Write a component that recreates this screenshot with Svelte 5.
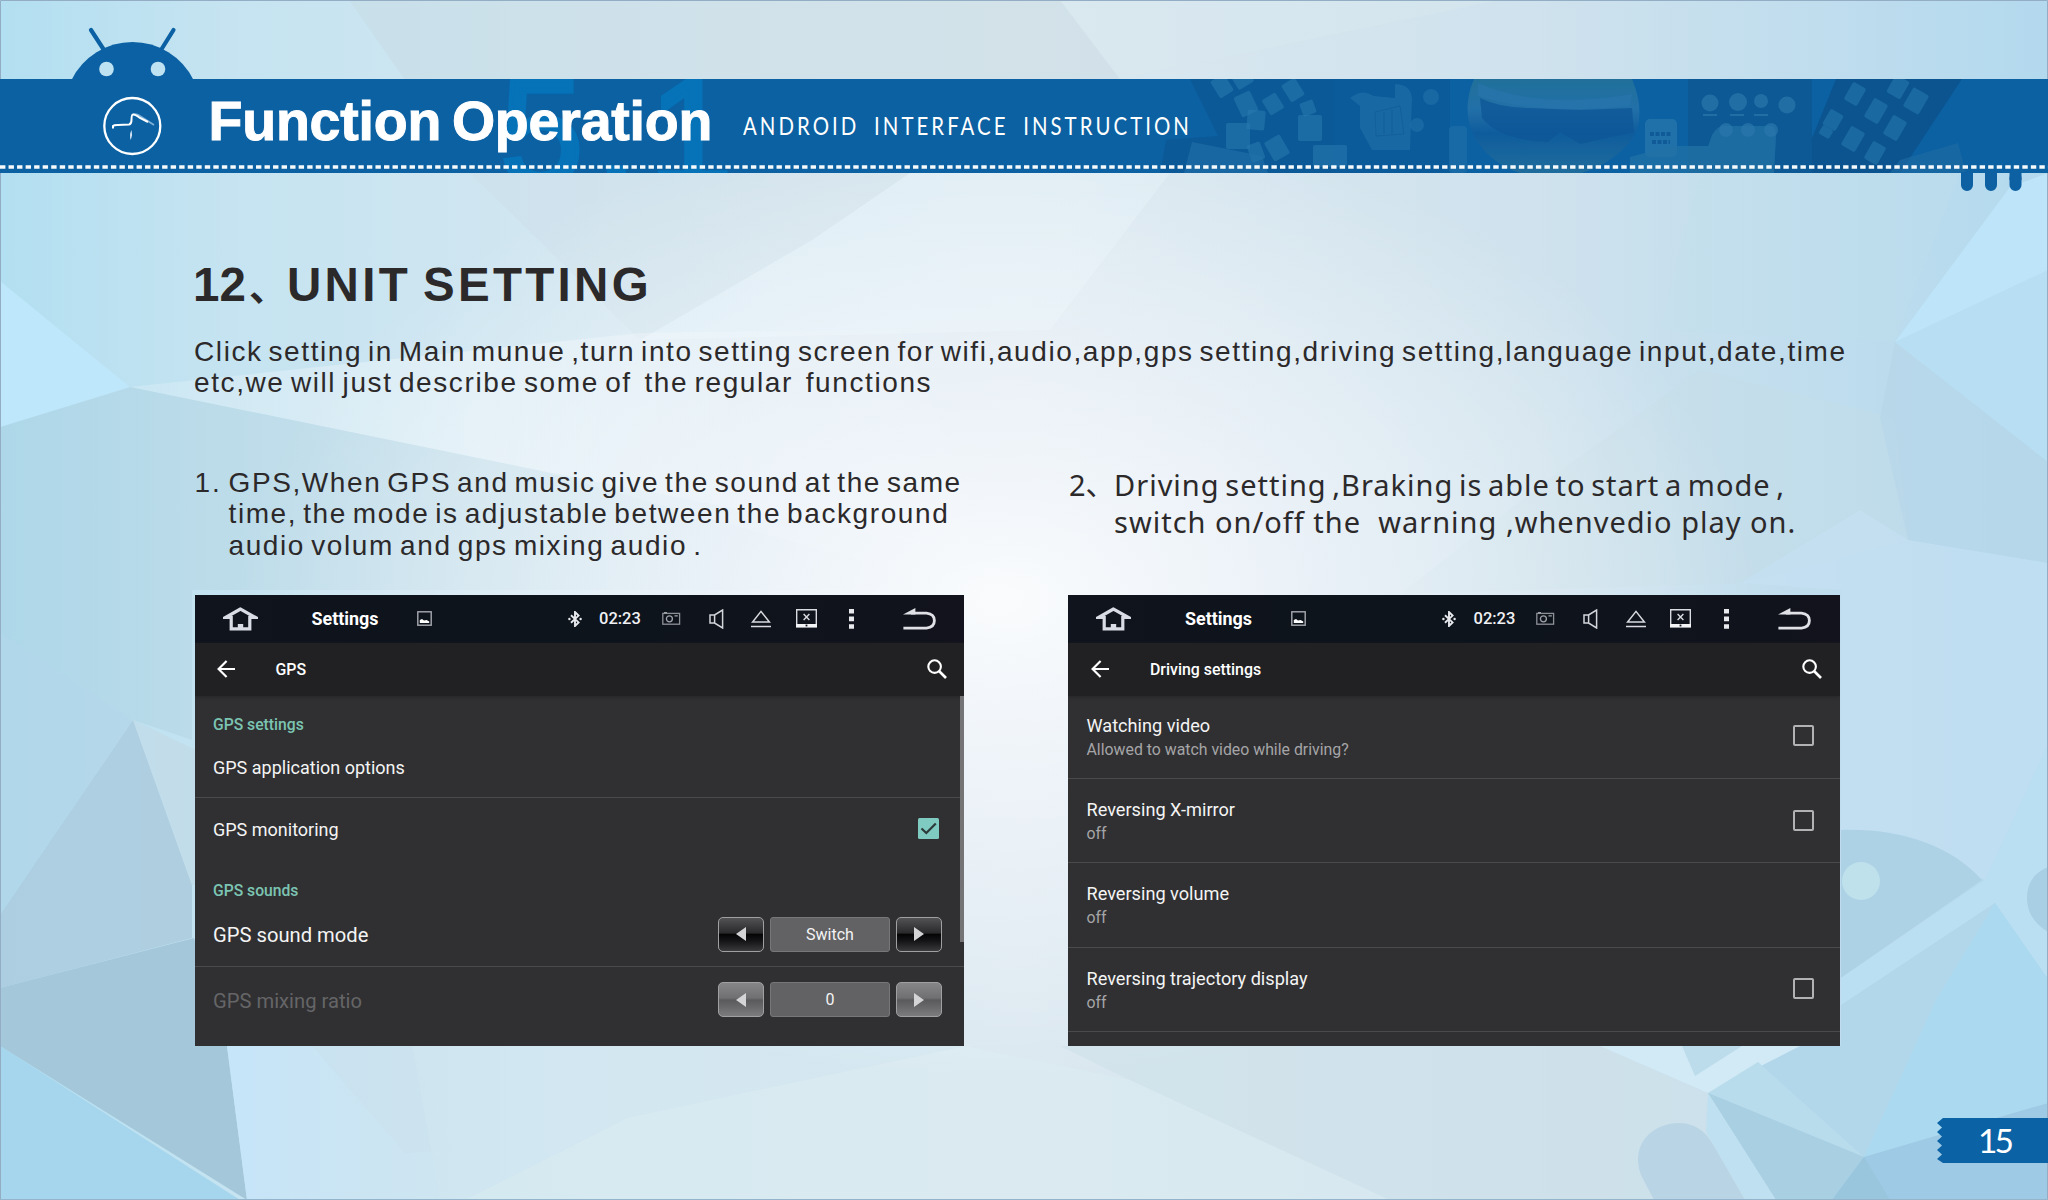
<script>
  const gpsSteppers = [
    { label: 'GPS sound mode', value: 'Switch', disabled: false },
    { label: 'GPS mixing ratio', value: '0', disabled: true }
  ];

  const drivingRows = [
    { title: 'Watching video', note: 'Allowed to watch video while driving?', box: true },
    { title: 'Reversing X-mirror', note: 'off', box: true },
    { title: 'Reversing volume', note: 'off', box: false },
    { title: 'Reversing trajectory display', note: 'off', box: true }
  ];

  // App tiles on the two tilted phones in the banner artwork
  const leftTiles = [
    [1222, 86, 16, 20, -32], [1242, 78, 18, 18, -32], [1246, 104, 18, 22, -25], [1273, 104, 16, 18, -32],
    [1293, 90, 16, 20, -32], [1256, 120, 18, 20, 5], [1238, 136, 24, 26, 0], [1310, 128, 24, 26, 0],
    [1308, 108, 14, 14, -20], [1277, 148, 18, 22, -30], [1256, 152, 14, 18, -20], [1330, 156, 34, 22, 0]
  ];
  const rightTiles = [
    [1855, 94, 15, 20, 30], [1876, 111, 16, 22, 30], [1898, 87, 16, 20, 30], [1916, 101, 18, 22, 30],
    [1833, 120, 15, 18, 30], [1853, 139, 16, 22, 30], [1895, 128, 16, 22, 30], [1875, 153, 15, 20, 30],
    [1826, 132, 12, 10, 30]
  ];
</script>

{#snippet statusBar()}
  <div class="status">
    <svg class="home" viewBox="0 0 35 24">
      <path d="M17.5 2 L2.5 10.5 H8.2 V21.8 H26.8 V10.5 H32.5 Z" fill="none" stroke="#d9dce4" stroke-width="3.2" />
      <path d="M14.8 22 V17 H20.2 V22 Z" fill="#d9dce4" />
    </svg>
    <span class="app">Settings</span>
    <svg class="pic" viewBox="0 0 15 15">
      <rect x=".8" y=".8" width="13.4" height="13.4" fill="none" stroke="#a7aab1" stroke-width="1.4" />
      <path d="M2.8 12 V9 L5 8 L7 9.6 L9.6 9 L12.2 10.4 V12 Z" fill="#fff" />
    </svg>
    <svg class="bt" viewBox="0 0 14 16">
      <path d="M3 4.2 L10.6 11.4 L7 15 V1 L10.6 4.6 L3 11.8" fill="none" stroke="#e6e8ec" stroke-width="1.9" />
      <circle cx="1.4" cy="8" r="1.2" fill="#e6e8ec" /><circle cx="12.6" cy="8" r="1.2" fill="#e6e8ec" />
    </svg>
    <span class="time">02:23</span>
    <svg class="cam" viewBox="0 0 19 13">
      <rect x=".8" y="1.4" width="16.8" height="10.8" fill="none" stroke="#8d9096" stroke-width="1.3" />
      <circle cx="7.4" cy="6.8" r="3" fill="none" stroke="#a0a3a8" stroke-width="1.3" />
      <path d="M12.5 3.8 H15.8 M2 .6 H5" stroke="#a0a3a8" stroke-width="1.2" />
    </svg>
    <svg class="spk" viewBox="0 0 15 20">
      <path d="M1 6 H5.6 L13.6 1 V19 L5.6 14 H1 Z M5.6 6 V14" fill="none" stroke="#d3d5da" stroke-width="1.5" />
    </svg>
    <svg class="eject" viewBox="0 0 20 18">
      <path d="M10 1.4 L18.4 12 H1.6 Z M0 16.6 H20" fill="none" stroke="#d9dbe0" stroke-width="1.5" />
    </svg>
    <svg class="scr" viewBox="0 0 21 19">
      <path d="M.7 .7 H20.3 V17 H.7 Z M7.6 5 L13.4 11 M13.4 5 L7.6 11" fill="none" stroke="#d9dbe0" stroke-width="1.4" />
      <path d="M0 15 H21 V18.6 H0 Z" fill="#f3f4f6" /><rect x="9.6" y="15.6" width="1.8" height="1.8" fill="#10141c" />
    </svg>
    <svg class="dots" viewBox="0 0 5 20">
      <path d="M0 0 H5 V4.6 H0 Z M0 7.6 H5 V12.2 H0 Z M0 15.2 H5 V19.8 H0 Z" fill="#e8e9ed" />
    </svg>
    <svg class="ret" viewBox="0 0 33 22">
      <path d="M8 5.2 H23.5 Q31.4 6 31.4 12.6 Q31.4 19.4 23.5 20.2 H.4" fill="none" stroke="#dfe1e7" stroke-width="2.8" />
      <path d="M0 6.6 L12.4 0 V6.6 Z" fill="#dfe1e7" />
    </svg>
  </div>
{/snippet}

{#snippet toolbar(title)}
  <div class="toolbar">
    <svg class="back" viewBox="0 0 18 18">
      <path d="M18 9 H2 M9.6 1 L1.6 9 L9.6 17" fill="none" stroke="#fff" stroke-width="2.2" />
    </svg>
    <span class="screen-title">{title}</span>
    <svg class="search" viewBox="0 0 20 20">
      <circle cx="7.6" cy="7.6" r="6.3" fill="none" stroke="#fff" stroke-width="2.1" />
      <path d="M12 12 L19 19" stroke="#fff" stroke-width="2.6" />
    </svg>
  </div>
{/snippet}

{#snippet arrow(dir, disabled)}
  <span class="btn" class:disabled>
    <svg class:flip={dir === 'right'} viewBox="0 0 10 14"><path d="M10 0 V14 L0 7 Z" /></svg>
  </span>
{/snippet}

<main>
  <svg class="backdrop" viewBox="0 0 2048 1200" aria-hidden="true">
    <defs>
      <linearGradient id="base" x1="0" x2="1" y1="0" y2="0">
        <stop offset="0" stop-color="#b2dff1" /><stop offset=".1" stop-color="#c4e3f1" />
        <stop offset=".3" stop-color="#d4e7f1" /><stop offset=".5" stop-color="#dbe8f0" />
        <stop offset=".75" stop-color="#cfe2ed" /><stop offset="1" stop-color="#b3d9ee" />
      </linearGradient>
      <radialGradient id="glow" gradientUnits="userSpaceOnUse" cx="0" cy="0" r="1" gradientTransform="translate(1000 600) scale(760 480)">
        <stop offset="0" stop-color="#fff" stop-opacity=".85" /><stop offset=".35" stop-color="#fbfbff" stop-opacity=".6" />
        <stop offset="1" stop-color="#fff" stop-opacity="0" />
      </radialGradient>
      <linearGradient id="fadeR" x1="0" x2="1"><stop offset="0" stop-color="#fff" stop-opacity=".18" /><stop offset=".4" stop-color="#fff" stop-opacity=".35" /><stop offset="1" stop-color="#fff" stop-opacity="0" /></linearGradient>
      <linearGradient id="fadeDark" x1="0" x2="1"><stop offset="0" stop-color="#a9cfe0" stop-opacity=".5" /><stop offset=".5" stop-color="#b4cfda" stop-opacity=".22" /><stop offset="1" stop-color="#a9cbd6" stop-opacity="0" /></linearGradient>
      <linearGradient id="fadeLow" x1="0" x2="1"><stop offset="0" stop-color="#c6e5f9" /><stop offset="1" stop-color="#cfe5f2" stop-opacity=".2" /></linearGradient>
    </defs>
    <rect width="2048" height="1200" fill="url(#base)" />
    <path d="M349 0 H1060 L1120 79 L1180 173 H470 Z" fill="#c6d8de" opacity=".36" />
    <path d="M1060 0 H1500 L1120 79 Z" fill="#dceaf0" opacity=".3" />
    <path d="M470 173 H910 L812 240 L640 340 Z" fill="#cbdbe5" opacity=".3" />
    <path d="M910 173 H1170 L1050 330 L640 340 L812 240 Z" fill="#e9f5fb" opacity=".35" />
    <path d="M130 387 L640 333 L900 330 L1000 560 L537 470 Z" fill="url(#fadeR)" />
    <path d="M130 387 L537 470 L965 590 H192 V740 L133 720 L0 633 V427 Z" fill="url(#fadeDark)" />
    <path d="M1548 480 L1700 370 L1895 418 L1910 540 L1740 583 L1400 594 Z" fill="#c7dde4" opacity=".35" />
    <path d="M1700 173 H1960 L1895 342 L1660 330 Z" fill="#c0dfea" opacity=".25" />
    <path d="M0 281 L130 387 L0 427 Z" fill="#bee7fb" />
    <path d="M0 633 L133 720 L0 915 Z" fill="#aed0e3" opacity=".55" />
    <path d="M133 720 L192 885 V938 L0 988 V915 Z" fill="#abcbde" opacity=".85" />
    <path d="M133 720 L200 752 V885 H192 Z" fill="#c2dbe8" opacity=".8" />
    <path d="M0 988 L194 938 L227 1046 L247 1200 L0 1046 Z" fill="#a4c7da" />
    <path d="M0 1046 L240 1200 H0 Z" fill="#a6d6ed" />
    <path d="M227 1046 H412 L440 1200 H247 Z" fill="url(#fadeLow)" />
    <path d="M312 1046 H412 L450 1150 L405 1153 Z" fill="#c9dfe9" opacity=".3" />
    <path d="M412 1046 H965 L627 1118 L465 1200 H440 Z" fill="#d2e7f2" opacity=".5" />
    <path d="M627 1118 L965 1046 L1130 1080 L1390 1200 H465 Z" fill="#dcedf2" opacity=".45" />
    <path d="M1060 1046 H1600 L1708 1093 L1776 1200 H1390 L1130 1080 Z" fill="#cfe1ea" opacity=".7" />
    <rect y="173" width="2048" height="1027" fill="url(#glow)" />

    <path d="M1895 342 L2010 187 L2048 173 V462 Z" fill="#bde4f8" />
    <path d="M1895 342 L2048 270 V462 Z" fill="#b7def3" />
    <path d="M1895 342 L2048 462 V563 L1908 540 L1880 418 Z" fill="#b6d5e8" opacity=".7" />
    <path d="M1860 510 L1908 540 L2048 563 V745 L1985 880 L1841 830 V590 L1740 583 Z" fill="#c4e1f2" opacity=".65" />
    <path d="M1841 830 C1900 828 1950 845 1982 880 L1841 978 Z" fill="#aed2e5" />
    <circle cx="1861" cy="881" r="19" fill="#bfe1ec" />
    <path d="M1841 978 L1985 880 L2048 745 V979 L1995 903 L1841 1005 Z" fill="#bbdff2" />
    <path d="M1841 1005 L1995 903 L2048 979 V1200 H1776 L1708 1093 L1780 1046 H1841 Z" fill="#b2d6ea" />
    <path d="M1936 1000 L1995 903 L2048 979 V1103 L1864 1157 Z" fill="#abdaf0" />
    <path d="M2048 867 Q2026 876 2027 900 Q2028 920 2048 932 Z" fill="#a8cfe4" />
    <path d="M1600 1046 H1800 L1708 1093 Z" fill="#d2eaf6" />
    <path d="M1682 1046 L1695 1076 L1742 1046 Z" fill="#bcdcec" />
    <path d="M1708 1093 L1758 1062 L1864 1157 Z" fill="#b8dcec" />
    <path d="M1708 1093 L1864 1157 L1832 1200 H1776 Z" fill="#a9cfe2" />
    <path d="M1864 1157 L2048 1103 V1200 H1832 Z" fill="#9ecae5" />
    <path d="M1864 1157 L1890 1200 H1832 Z" fill="#99c5dd" />
    <path d="M1708 1093 L1776 1200 H1745 L1706 1132 Z" fill="#bfe0f0" />
    <path d="M1654 1200 L1641 1175 C1628 1140 1660 1118 1688 1124 C1703 1128 1709 1138 1714 1146 L1745 1200 Z" fill="#b9d5e5" />
    <path d="M.5 1200 V.5 H2047.5 V1200" fill="none" stroke="#93aec4" />
    <path d="M0 1199.5 H2048" stroke="#93b4cb" />
  </svg>

  <header>
    <svg class="banner" viewBox="0 0 2048 200" aria-hidden="true">
      <defs>
        <clipPath id="band"><rect y="79" width="2048" height="94" /></clipPath>
        <linearGradient id="sphere" x1="0" x2="0" y1="0" y2="1">
          <stop offset="0" stop-color="#20709a" /><stop offset=".3" stop-color="#2270a8" />
          <stop offset=".55" stop-color="#0f5c9d" /><stop offset="1" stop-color="#216f9c" />
        </linearGradient>
      </defs>
      <path d="M71.500 80 A68 68 0 0 1 193.500 80 Z" fill="#0b61a3" />
      <path d="M91 30 L104 50 M173.500 30 L161 50" stroke="#0b61a3" stroke-width="4.200" stroke-linecap="round" />
      <rect y="79" width="2048" height="94" fill="#0b61a2" />
      <circle cx="106.500" cy="69" r="7.300" fill="#bfe2f3" /><circle cx="158" cy="69" r="7.300" fill="#bfe2f3" />
      <g clip-path="url(#band)">
        <text class="ghost" x="500" y="184">5.1</text>
        <path d="M1190 79 H1335 V173 H1160 L1166 140 L1218 136 Z" fill="#0c5793" opacity=".75" />
        <path d="M1335 79 H1450 V173 H1335 Z" fill="#0b5a99" opacity=".9" />
        {#each leftTiles as [x, y, w, h, r]}
          <rect class="tile" x={x - w / 2} y={y - h / 2} width={w} height={h} rx="2" transform="rotate({r} {x} {y})" />
        {/each}
        <path d="M1192 142 L1262 156 L1268 173 H1184 Z" fill="#2272aa" opacity=".6" />
        <path d="M1350 98 Q1362 88 1374 96 L1395 98 V84 Q1410 84 1412 98 L1410 150 H1372 L1360 128 V106 Z" fill="#2272aa" opacity=".6" />
        <path d="M1375 112 L1400 106 L1404 134 L1376 136 Z M1384 112 V134 M1392 110 V134" fill="none" stroke="#0f5b99" opacity=".7" />
        <circle cx="1431" cy="97" r="8" fill="#2272aa" opacity=".6" /><circle cx="1417" cy="125" r="7" fill="#2272aa" opacity=".6" />
        <rect x="1449" y="126" width="18" height="47" rx="4" fill="#1f6fa9" opacity=".6" />
        <path d="M1474 79 H1632 Q1648 118 1630 142 Q1600 176 1550 178 Q1500 176 1476 140 Q1460 112 1474 79 Z" fill="url(#sphere)" />
        <path d="M1480 98 Q1500 108 1530 108 L1580 110 L1632 108 L1634 132 L1580 144 L1560 132 L1548 142 Q1500 140 1482 118 Z" fill="#0e5697" opacity=".75" />
        <path d="M1478 83 Q1540 110 1632 94 L1630 106 Q1540 116 1478 96 Z" fill="#2a76b0" opacity=".5" />
        <path d="M1688 79 H1812 V173 H1688 Z" fill="#0c5792" opacity=".8" />
        <rect x="1645" y="119" width="32" height="38" rx="5" fill="#2574ab" opacity=".85" />
        <path d="M1650 134 H1672 M1652 142 H1670" stroke="#115a98" stroke-width="4" stroke-dasharray="4 1.500" />
        <path d="M1630 157 L1670 146 H1708 L1712 135 Q1718 124 1728 126 L1772 126 Q1776 128 1776 138 L1774 173 H1630 Z" fill="#2271a6" opacity=".75" />
        <g fill="#2876ab" opacity=".75">
          <circle cx="1710" cy="103" r="8.500" /><circle cx="1738" cy="102" r="9" /><circle cx="1761" cy="101" r="7" />
          <circle cx="1787" cy="105" r="8.500" /><rect x="1703" y="114" width="14" height="2" /><rect x="1730" y="114" width="14" height="2" />
          <rect x="1754" y="114" width="14" height="2" />
          <circle cx="1726" cy="130" r="7" /><circle cx="1748" cy="130" r="7" /><circle cx="1771" cy="130" r="7" />
        </g>
        <path d="M1836 79 H1962 L1900 173 H1812 V138 Z" fill="#0b518c" opacity=".8" />
        {#each rightTiles as [x, y, w, h, r]}
          <rect class="tile" x={x - w / 2} y={y - h / 2} width={w} height={h} rx="2" transform="rotate({r} {x} {y})" />
        {/each}
        <path d="M1900 160 L1958 143 L1966 173 H1890 Z" fill="#1d69a3" opacity=".7" />
      </g>
      <path d="M0 167 H2048" stroke="#f5fafd" stroke-width="3.600" stroke-dasharray="5.400 3.133" />
      <path d="M1967 178 V185 M1991 178 V185 M2015.500 178 V185" stroke="#0d60a1" stroke-width="12" stroke-linecap="round" />
      <path d="M1961 172 H1973 V180 H1961 Z M1985 172 H1997 V180 H1985 Z M2009.500 172 H2021.500 V180 H2009.500 Z" fill="#0d60a1" />
      <circle cx="132.300" cy="126" r="28" fill="none" stroke="#fff" stroke-width="2.300" />
      <path d="M132 115 Q136 113 140 116 L154 125" fill="none" stroke="#7fb0d6" stroke-width="1.800" />
      <path d="M113 128.500 V126 Q114 124.800 118 124.900 L129 124.500 Q131.500 124 131.500 120 Q131.500 114.500 133 114.500 Q135 114.200 140 118 L148 122" fill="none" stroke="#fff" stroke-width="2" />
      <path d="M131.500 130 Q129 135 130.800 140 Q133 135 131.500 130 Z" fill="#dcebf6" />
    </svg>
    <h1>Function Operation</h1>
    <p class="subtitle">ANDROID INTERFACE INSTRUCTION</p>
  </header>

  <section class="intro">
    <h2><span class="num">12</span><span class="mark">、</span><span class="unit">UNIT</span><span>SETTING</span></h2>
    <p class="lead">Click setting in Main munue ,turn into setting screen for wifi,audio,app,gps setting,driving setting,language input,date,time</p>
    <p class="lead-end">etc,we will just describe some of&nbsp; the regular&nbsp; functions</p>
  </section>

  <div class="columns">
    <section class="col">
      <div class="step first">
        <span class="index">1.</span>
        <div>
          <p class="gps-a">GPS,When GPS and music give the sound at the same</p>
          <p class="gps-b">time, the mode is adjustable between the background</p>
          <p class="gps-c">audio volum and gps mixing audio .</p>
        </div>
      </div>
      <div class="screen">
        {@render statusBar()}
        {@render toolbar('GPS')}
        <div class="list">
          <div class="category">GPS settings</div>
          <div class="item app-options">GPS application options</div>
          <div class="item monitoring">
            GPS monitoring
            <svg class="checked" viewBox="0 0 21 21">
              <rect width="21" height="21" rx="1.500" fill="#80cbc1" />
              <path d="M3.500 10.500 L8.300 15 L17.800 5.500" fill="none" stroke="#2c3a3a" stroke-width="2.200" />
            </svg>
          </div>
          <div class="category sounds">GPS sounds</div>
          {#each gpsSteppers as s}
            <div class="item stepper" class:muted={s.disabled}>
              <span class="label">{s.label}</span>
              {@render arrow('left', s.disabled)}
              <span class="value">{s.value}</span>
              {@render arrow('right', s.disabled)}
            </div>
          {/each}
          <div class="scrollbar"></div>
        </div>
      </div>
    </section>

    <section class="col right">
      <div class="step second">
        <span class="index">2、</span>
        <div>
          <p class="drive-a">Driving setting ,Braking is able to start a mode ,</p>
          <p class="drive-b">switch on/off the&nbsp; warning ,whenvedio play on.</p>
        </div>
      </div>
      <div class="screen">
        {@render statusBar()}
        {@render toolbar('Driving settings')}
        <div class="list prefs">
          {#each drivingRows as row}
            <div class="pref">
              <div>
                <div class="pref-title">{row.title}</div>
                <div class="pref-note">{row.note}</div>
              </div>
              {#if row.box}<span class="box"></span>{/if}
            </div>
          {/each}
        </div>
      </div>
    </section>
  </div>

  <footer>
    <svg viewBox="0 0 6 45" preserveAspectRatio="none">
      <path d="M6 0 L0 5 L5 9.500 L0 14 L5 18.500 L0 23 L5 27.500 L0 32 L5 36.500 L0 41 L6 45 Z" fill="#0b62a4" />
    </svg>
    <span>15</span>
  </footer>
</main>

<style>
  :global(body) { margin: 0; }
  main {
    position: relative;
    display: flex;
    flex-direction: column;
    width: 2048px;
    height: 1200px;
    overflow: hidden;
    font-family: 'Liberation Sans', Arial, sans-serif;
    color: #2c292b;
  }
  p, h1, h2 { margin: 0; font-weight: 400; white-space: nowrap; }
  svg { display: block; flex: none; }
  .backdrop { position: absolute; inset: 0; width: 2048px; height: 1200px; }

  header {
    position: relative;
    display: flex;
    align-items: center;
    box-sizing: border-box;
    height: 173px;
    padding: 79px 0 10px 208.500px;
    color: #fff;
  }
  .banner { position: absolute; left: 0; top: 0; width: 2048px; height: 200px; }
  .ghost { font: 150px 'Liberation Sans', Arial, sans-serif; letter-spacing: 12px; fill: #0672b8; stroke: #0672b8; stroke-width: 5px; }
  .tile { fill: #2c7db2; opacity: .5; }
  h1 {
    position: relative; width: 534.500px; font-size: 55.500px; line-height: 60px; font-weight: 700;
    letter-spacing: -.2px; word-spacing: -4.500px; -webkit-text-stroke: 1px #fff;
  }
  .subtitle {
    position: relative;
    padding-top: 8px;
    font-family: Lato, sans-serif;
    font-size: 25.500px;
    line-height: 30px;
    letter-spacing: 3.800px;
    word-spacing: 8px;
    transform: scaleX(.8);
    transform-origin: left;
  }

  .intro { position: relative; box-sizing: border-box; padding: 84.500px 0 0 194px; height: 282px; }
  h2 { display: flex; font-size: 47.500px; line-height: 54px; font-weight: 700; margin-bottom: 24px; letter-spacing: 3.300px; }
  .num { width: 55px; letter-spacing: 0; text-indent: -1px; }
  .mark { width: 38px; font-family: 'Noto Sans CJK SC', sans-serif; font-size: 38px; letter-spacing: 0; }
  .unit { width: 136px; }
  .intro p, .first p, .first .index { font-size: 28px; line-height: 31.400px; letter-spacing: 1.600px; }
  .intro .lead { word-spacing: -3.550px; }
  .intro .lead-end { word-spacing: -3px; }
  .first .gps-a { word-spacing: -3.500px; }
  .first .gps-b { word-spacing: -3.400px; }
  .first .gps-c { word-spacing: -3.200px; }

  .columns { position: relative; display: flex; padding-left: 194.500px; gap: 104px; }
  .col { width: 769.500px; }
  .right, .right .screen { width: 771.500px; }
  .step { display: flex; box-sizing: border-box; height: 139.500px; }
  .step .index { flex: none; }
  .first { padding-top: 12px; }
  .first .index { width: 34px; letter-spacing: 2px; }
  .second { padding-top: 12px; font: 29px/36.500px 'Noto Sans', 'Noto Sans CJK SC', sans-serif; }
  .second .index { width: 46px; text-indent: 1px; }
  .drive-a { letter-spacing: 1px; word-spacing: -2.900px; text-indent: 0; }
  .drive-b { letter-spacing: 1px; text-indent: 0; }

  .screen { width: 769.500px; height: 451px; overflow: hidden; background: #303032; color: #f4f4f4; font-family: Roboto, sans-serif; }
  .status { display: flex; align-items: center; height: 48px; background: linear-gradient(90deg, #10141c, #0d141c 50%, #12131c); }
  .home { width: 35px; height: 24px; margin-left: 28px; }
  .app { width: 80px; margin-left: 54px; font-size: 17.900px; font-weight: 700; color: #fff; }
  .pic { width: 15px; height: 15px; margin-left: 25.500px; }
  .bt { width: 14px; height: 16px; margin-left: 135.500px; }
  .time { width: 44px; margin-left: 17.500px; font-size: 16.500px; font-weight: 500; color: #f0f1f4; }
  .cam { width: 19px; height: 13px; margin-left: 18.500px; }
  .spk { width: 15px; height: 20px; margin-left: 28px; }
  .eject { width: 20px; height: 18px; margin-left: 27.500px; }
  .scr { width: 21px; height: 19px; margin-left: 24.500px; }
  .dots { width: 5px; height: 20px; margin-left: 32.500px; }
  .ret { width: 33px; height: 22px; margin-left: 49px; }
  .right .bt { margin-left: 136.500px; }

  .toolbar { display: flex; align-items: center; height: 53px; background: #212123; box-shadow: 0 1px 3px #26262a; position: relative; }
  .back { width: 18px; height: 18px; margin-left: 22px; }
  .right .back { margin-left: 23px; }
  .screen-title { margin-left: 41px; font-size: 15.900px; font-weight: 500; color: #fff; }
  .search { width: 20px; height: 20px; margin: 0 17.500px 0 auto; }

  .list { position: relative; height: 350px; }
  .category { box-sizing: border-box; height: 41px; padding: 16px 0 0 18.500px; font-size: 15.700px; line-height: 25px; font-weight: 500; color: #7cc4b2; }
  .sounds { padding-top: 18px; line-height: 23px; }
  .item { display: flex; align-items: center; box-sizing: border-box; padding-left: 18.500px; font-size: 18px; }
  .app-options { height: 61.500px; padding-top: 1px; border-bottom: 1px solid #4a4a4c; }
  .monitoring { height: 63px; }
  .checked { width: 21px; height: 21px; margin: 0 25px 3px auto; }
  .stepper { height: 65px; font-size: 20.200px; }
  .stepper:not(.muted) { border-bottom: 1.500px solid #4a4a4c; }
  .stepper .label { padding-top: 2px; }
  .stepper.muted .label { color: #656567; }
  .label { width: 505px; }
  .value {
    width: 118px; height: 33px; margin: 0 6px; border: 1px solid #77777a; border-radius: 3px;
    background: #626264; font-size: 16px; line-height: 34.500px; text-align: center;
  }
  .btn {
    display: grid; place-items: center; box-sizing: border-box; width: 46px; height: 35px;
    border: 1.500px solid #a0a0a2; border-radius: 5px;
    background: linear-gradient(#525254, #2a2a2c 45%, #050506 50%, #151517 70%, #3a3a3c);
  }
  .btn.disabled { background: linear-gradient(#868688, #707072 45%, #5a5a5c 52%, #6a6a6c 75%, #7c7c7e); }
  .btn svg { width: 10px; height: 14px; fill: #d4d4d6; }
  .btn .flip { transform: scaleX(-1); }
  .scrollbar { position: absolute; right: 0; top: 0; width: 4px; height: 246px; background: #747375; }

  .prefs { top: -1px; }
  .pref { display: flex; align-items: center; justify-content: space-between; box-sizing: border-box; height: 84.400px; padding: 2px 26px 0 18.500px; border-bottom: 1.500px solid #4a4a4c; }
  .pref-title { font-size: 18.150px; line-height: 24px; }
  .pref-note { font-size: 15.850px; line-height: 23px; color: #a5a5a7; }
  .box { width: 17px; height: 17px; margin-bottom: 3px; border: 2px solid #b2b2b4; border-radius: 2px; }

  footer { position: absolute; right: 0; top: 1118px; display: flex; width: 111px; height: 45px; color: #fff; }
  footer svg { width: 6px; height: 45px; }
  footer span { flex: 1; padding-left: 35px; background: #0b62a4; font: 33.500px/45px Lato, sans-serif; letter-spacing: -3px; }
</style>
